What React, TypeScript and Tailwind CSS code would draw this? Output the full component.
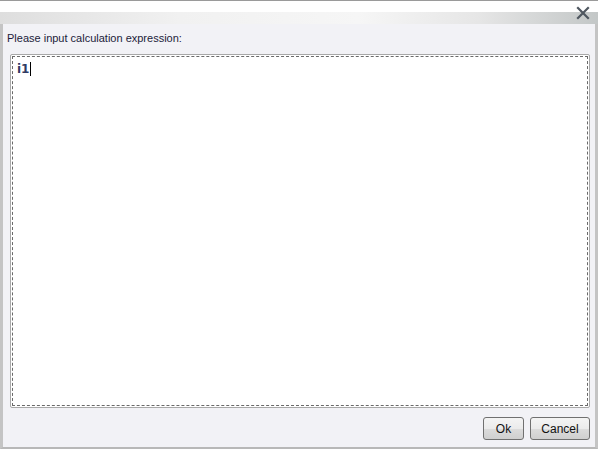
import React from "react";

export default function App() {
  return (
    <div className="w-[598px] h-[449px] flex flex-col bg-[#f2f2f6] overflow-hidden" style={{ fontFamily: "'Liberation Sans', Arial, sans-serif" }}>
      {/* title bar */}
      <div className="h-[24px] shrink-0 flex flex-col border-t border-[#9a9a9a] relative">
        <div className="h-[11px] bg-white" />
        <div className="flex-1 bg-[linear-gradient(to_right,#dedede_0%,#f1f1f1_30%,#f6f6f6_60%,#e6e6e6_80%,#c3c7c7_100%)]" />
        <div className="absolute right-[8px] top-[5px] w-[14px] h-[14px]">
          <svg viewBox="0 0 14 14" width="14" height="14">
            <path d="M2 2 L12 12 M12 2 L2 12" stroke="#4f5760" strokeWidth="2.2" strokeLinecap="square" />
          </svg>
        </div>
      </div>
      {/* body */}
      <div className="flex-1 flex flex-col border-l-[3px] border-l-[#c4c4c4] border-r-[3px] border-r-[#c4c4c4] border-b-[2px] border-b-[#b8b8b8] pl-[4px] pr-[4px]">
        <div className="h-[30px] flex items-center text-[11px] text-[#1c1c3a] pb-[2px]">
          Please input calculation expression:
        </div>
        <div className="h-[354px] ml-[3px] mr-[1px] border border-[#a8a8a8] rounded-[2px] bg-white p-[1px]">
          <div className="w-full h-full border border-dashed border-[#6a6a6a] px-[4px] pt-[3px] leading-[15px]">
            <span className="text-[12px] font-bold text-[#303a63]" style={{ fontFamily: "'DejaVu Sans', sans-serif" }}>i1</span>
            <span className="inline-block w-[1px] h-[14px] bg-black align-[-3px] ml-[1px]" />
          </div>
        </div>
        <div className="flex-1 flex justify-end items-center gap-[6px] pr-[1px] pt-[2px]">
          <button className="w-[41px] h-[23px] rounded-[3px] border border-[#707070] bg-[linear-gradient(to_bottom,#f4f4f4_0%,#ebebeb_50%,#dcdcdc_51%,#cfcfcf_100%)] text-[12px] text-[#111]">Ok</button>
          <button className="w-[60px] h-[23px] rounded-[3px] border border-[#707070] bg-[linear-gradient(to_bottom,#f4f4f4_0%,#ebebeb_50%,#dcdcdc_51%,#cfcfcf_100%)] text-[12px] text-[#111]">Cancel</button>
        </div>
      </div>
    </div>
  );
}
